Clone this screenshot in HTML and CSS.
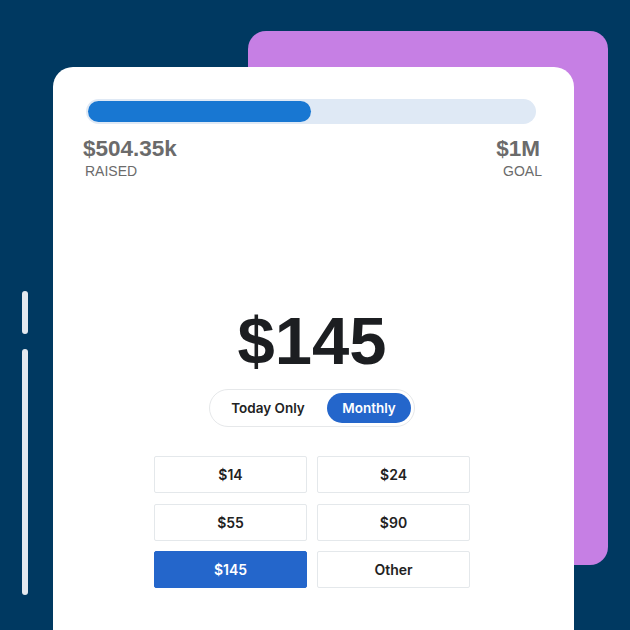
FILE: index.html
```html
<!DOCTYPE html>
<html>
<head>
<meta charset="utf-8">
<link rel="stylesheet" href="styles.css">
</head>
<body>
<div class="scene">
  <div class="backdrop"></div>
  <div class="rail rail-short"></div>
  <div class="rail rail-long"></div>
  <div class="card">
    <div class="track"><div class="fill" style="width:223px"></div></div>
    <div class="labels">
      <div class="stat">
        <div class="stat-value">$504.35k</div>
        <div class="stat-name raised">RAISED</div>
      </div>
      <div class="stat stat-right">
        <div class="stat-value goal-value">$1M</div>
        <div class="stat-name">GOAL</div>
      </div>
    </div>
    <div class="amount">$145</div>
    <div class="toggle">
      <div class="seg seg-left">Today Only</div>
      <div class="seg seg-active">Monthly</div>
    </div>
    <div class="grid">
      <div class="opt">$14</div>
      <div class="opt">$24</div>
      <div class="opt">$55</div>
      <div class="opt">$90</div>
      <div class="opt opt-active">$145</div>
      <div class="opt">Other</div>
    </div>
  </div>
</div>
</body>
</html>
```
FILE: styles.css
```css
html, body {
  margin: 0;
  padding: 0;
}
body {
  width: 630px;
  height: 630px;
  overflow: hidden;
  background: #003961;
  font-family: "Liberation Sans", Arial, sans-serif;
}
.scene {
  position: relative;
  width: 630px;
  height: 630px;
  overflow: hidden;
}
.backdrop {
  position: absolute;
  left: 248px;
  top: 31px;
  width: 360px;
  height: 534px;
  border-radius: 18px;
  background: #c67fe4;
}
.rail {
  position: absolute;
  left: 22px;
  width: 6px;
  border-radius: 3px;
  background: #e4e9ef;
}
.rail-short {
  top: 291px;
  height: 43px;
}
.rail-long {
  top: 349px;
  height: 246px;
}
.card {
  position: absolute;
  left: 53px;
  top: 67px;
  width: 521px;
  height: 563px;
  box-sizing: border-box;
  border-radius: 20px 20px 0 0;
  background: #ffffff;
  padding: 32px 37px 0 34px;
  display: flex;
  flex-direction: column;
  align-items: center;
}
.track {
  align-self: stretch;
  margin: 0 1px 0 -1px;
  height: 25px;
  box-sizing: border-box;
  padding: 2px;
  border-radius: 13px;
  background: #dfe9f5;
}
.fill {
  height: 21px;
  border-radius: 11px;
  background: #1877d2;
}
.labels {
  align-self: stretch;
  display: flex;
  justify-content: space-between;
  margin: 12px -5px 0 -4px;
}
.stat {
  display: flex;
  flex-direction: column;
  align-items: flex-start;
}
.stat-right {
  align-items: flex-end;
}
.stat-value {
  font-size: 22.5px;
  line-height: 26px;
  font-weight: 700;
  color: #6b6b6b;
}
.goal-value {
  padding-right: 2px;
}
.stat-name {
  font-size: 14px;
  line-height: 16px;
  color: #6b6b6b;
  margin-top: 1px;
}
.raised {
  padding-left: 2px;
}
.amount {
  margin-top: 128px;
  font-size: 67px;
  line-height: 67px;
  font-weight: 700;
  color: #1c1e21;
}
.toggle {
  margin-top: 15px;
  width: 206px;
  height: 38px;
  box-sizing: border-box;
  border: 1px solid #e6e8ea;
  border-radius: 19px;
  padding: 3px;
  display: flex;
  gap: 4px;
  font-family: Inter, "Liberation Sans", sans-serif;
  font-size: 13.5px;
  font-weight: 600;
}
.seg {
  display: flex;
  align-items: center;
  justify-content: center;
  height: 30px;
  border-radius: 15px;
  color: #222222;
}
.seg-left {
  width: 110px;
}
.seg-active {
  width: 84px;
  background: #2466cb;
  color: #ffffff;
}
.grid {
  margin-top: 29px;
  display: grid;
  grid-template-columns: 153px 153px;
  grid-auto-rows: 37px;
  column-gap: 10px;
  row-gap: 10.5px;
}
.opt {
  box-sizing: border-box;
  border: 1.5px solid #e4e8eb;
  border-radius: 2px;
  display: flex;
  align-items: center;
  justify-content: center;
  font-family: Inter, "Liberation Sans", sans-serif;
  font-size: 14px;
  font-weight: 600;
  color: #222222;
}
.opt-active {
  background: #2466cb;
  border-color: #2466cb;
  color: #ffffff;
}
```
